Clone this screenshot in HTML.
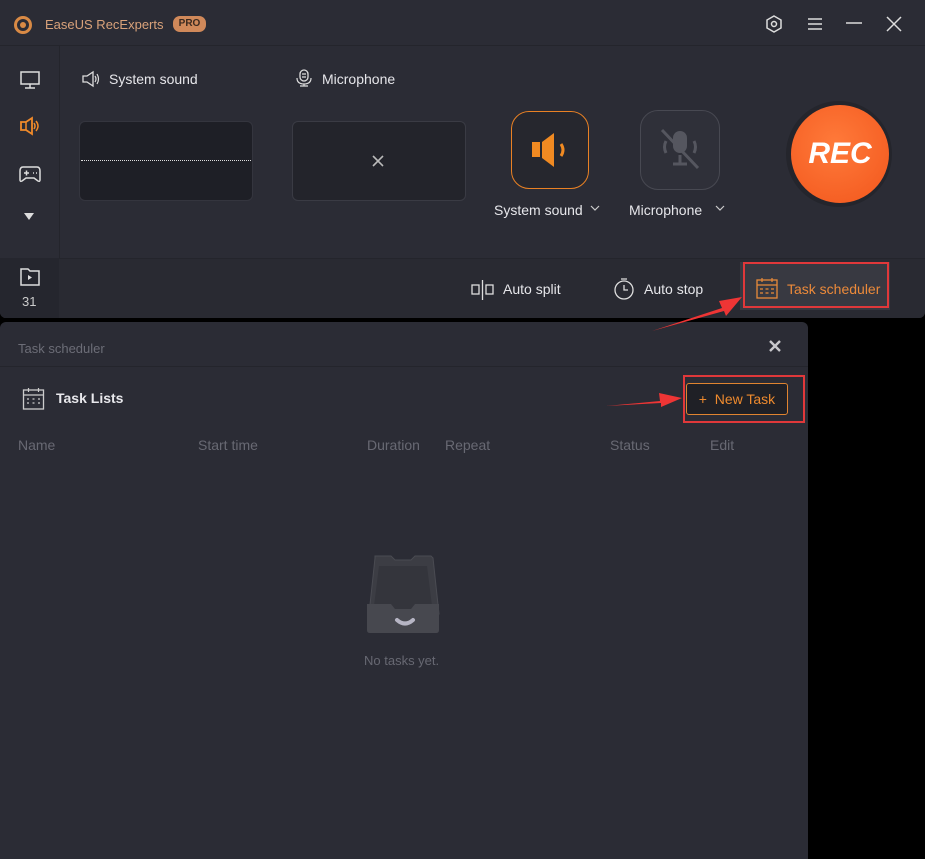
<!DOCTYPE html>
<html><head><meta charset="utf-8"><style>
*{margin:0;padding:0;box-sizing:border-box}
body{width:925px;height:859px;background:#000;position:relative;overflow:hidden;font-family:"Liberation Sans",sans-serif;color:#e6e6ea}
.a{position:absolute}
.win{left:0;top:0;width:925px;height:318px;background:#2b2c35;border-radius:0 0 6px 6px;overflow:hidden}
.pan{left:0;top:322px;width:808px;height:537px;background:#2b2c35;border-radius:6px 6px 0 0}
.t{font-size:14px;white-space:nowrap}
</style></head><body>
<div class="a win">
 <div class="a" style="left:0;top:45px;width:925px;height:1px;background:#24252c"></div>
 <div class="a" style="left:59px;top:46px;width:1px;height:212px;background:#24252c"></div>
 <div class="a" style="left:0;top:258px;width:925px;height:60px;background:#292a32;border-top:1px solid #24252c"></div>
 <div class="a" style="left:0;top:258px;width:59px;height:60px;background:#25262e"></div>
 <svg class="a" style="left:13px;top:15px" width="20" height="20"><circle cx="10" cy="10" r="7.5" fill="none" stroke="#d98a45" stroke-width="3"/><circle cx="10" cy="10" r="3" fill="#d98a45"/></svg>
 <div class="a t" style="left:45px;top:17px;color:#d9a27a;font-size:13px">EaseUS RecExperts</div>
 <div class="a" style="left:173px;top:16px;width:33px;height:16px;border-radius:7px;background:#d0895a;color:#3a2a20;font-size:10px;font-weight:bold;text-align:center;line-height:16px">PRO</div>
 <svg class="a" style="left:764px;top:14px" width="20" height="20"><path d="M10 2l7 4v8l-7 4-7-4V6z" fill="none" stroke="#ddd" stroke-width="1.5"/><circle cx="10" cy="10" r="2.5" fill="none" stroke="#ddd" stroke-width="1.5"/></svg>
 <svg class="a" style="left:806px;top:16px" width="18" height="16"><path d="M2 3h14M2 8h14M2 13h14" stroke="#ddd" stroke-width="1.5"/></svg>
 <svg class="a" style="left:845px;top:16px" width="18" height="16"><path d="M1 7h16" stroke="#ddd" stroke-width="1.5"/></svg>
 <svg class="a" style="left:885px;top:15px" width="18" height="18"><path d="M2 2l14 14M16 2L2 16" stroke="#ddd" stroke-width="1.5"/></svg>
 <svg class="a" style="left:19px;top:70px" width="22" height="20"><rect x="2" y="2" width="18" height="12" fill="none" stroke="#ddd" stroke-width="1.5"/><path d="M11 14v4M6 18h10" stroke="#ddd" stroke-width="1.5"/></svg>
 <svg class="a" style="left:19px;top:116px" width="22" height="20"><path d="M2 6h5l6-4v16l-6-4H2z" fill="none" stroke="#f08a2a" stroke-width="1.8"/><path d="M7 6v8" stroke="#f08a2a" stroke-width="1.5"/><path d="M15 7q2 3 0 6M17 5q4 5 0 10" fill="none" stroke="#f08a2a" stroke-width="1.5"/></svg>
 <svg class="a" style="left:18px;top:164px" width="24" height="20"><path d="M5 3h14q3 0 3 4v9q0 2-2 1l-4-3H8l-4 3q-2 1-2-1V7q0-4 3-4z" fill="none" stroke="#ddd" stroke-width="1.5"/><path d="M6 9h5M8.5 6.5v5M15 9h1M18 9h1" stroke="#ddd" stroke-width="1.5"/></svg>
 <svg class="a" style="left:23px;top:212px" width="12" height="10"><path d="M1 1h10L6 8z" fill="#ddd"/></svg>
 <svg class="a" style="left:19px;top:267px" width="22" height="20"><path d="M2 2h7l2 2h9v14H2z" fill="none" stroke="#ddd" stroke-width="1.5"/><path d="M9 8l4 2.5-4 2.5z" fill="#ddd"/></svg>
 <div class="a" style="left:22px;top:294px;font-size:13px;color:#ccc">31</div>
 <svg class="a" style="left:82px;top:70px" width="20" height="18"><path d="M1 6h4l6-4v14l-6-4H1z" fill="none" stroke="#ddd" stroke-width="1.3"/><path d="M13 6q2 3 0 6M15 4q3 5 0 10" fill="none" stroke="#ddd" stroke-width="1.2"/></svg>
 <div class="a t" style="left:109px;top:71px">System sound</div>
 <svg class="a" style="left:295px;top:69px" width="18" height="18"><rect x="5" y="1" width="8" height="11" rx="4" fill="none" stroke="#ddd" stroke-width="1.3"/><path d="M7 5h4M7 8h4M2 9q0 6 7 6t7-6M9 15v2M5 17h8" fill="none" stroke="#ddd" stroke-width="1.2"/></svg>
 <div class="a t" style="left:322px;top:71px">Microphone</div>
 <div class="a" style="left:79px;top:121px;width:174px;height:80px;background:#1e1f26;border-radius:6px;border:1px solid #34353e"></div>
 <div class="a" style="left:81px;top:160px;width:170px;border-top:1px dotted #ddd"></div>
 <div class="a" style="left:292px;top:121px;width:174px;height:80px;background:#23242b;border-radius:6px;border:1px solid #3a3b44"></div>
 <svg class="a" style="left:371px;top:154px" width="14" height="14"><path d="M2 2l10 10M12 2L2 12" stroke="#bbb" stroke-width="1.6"/></svg>
 <div class="a" style="left:511px;top:111px;width:78px;height:78px;border-radius:18px;border:1.5px solid #e98124;background:#26272e"></div>
 <svg class="a" style="left:530px;top:131px" width="42" height="38"><rect x="2" y="11" width="8" height="15" fill="#f08a22"/><path d="M12 11l12-9v34l-12-9z" fill="#f08a22"/><path d="M31 13q4 6 0 12" fill="none" stroke="#f08a22" stroke-width="3"/></svg>
 <div class="a" style="left:640px;top:110px;width:80px;height:80px;border-radius:18px;border:1px solid #484952;background:#2f3039"></div>
 <svg class="a" style="left:656px;top:127px" width="48" height="46"><rect x="17" y="4" width="14" height="22" rx="7" fill="#55565f"/><path d="M10 14q-3 6 0 12M38 14q3 6 0 12" stroke="#55565f" stroke-width="3" fill="none"/><path d="M24 28v8M17 37h14" stroke="#55565f" stroke-width="3"/><path d="M6 3l36 38" stroke="#55565f" stroke-width="3"/></svg>
 <div class="a t" style="left:494px;top:202px">System sound</div>
 <svg class="a" style="left:590px;top:205px" width="10" height="7"><path d="M1 1l4 4 4-4" fill="none" stroke="#ccc" stroke-width="1.2"/></svg>
 <div class="a t" style="left:629px;top:202px">Microphone</div>
 <svg class="a" style="left:715px;top:205px" width="10" height="7"><path d="M1 1l4 4 4-4" fill="none" stroke="#ccc" stroke-width="1.2"/></svg>
 <div class="a" style="left:786px;top:101px;width:106px;height:106px;border-radius:50%;background:#24252c"></div>
 <div class="a" style="left:791px;top:105px;width:98px;height:98px;border-radius:50%;background:radial-gradient(circle at 45% 40%,#ff7a3a,#f2561c);color:#fff;font-weight:bold;font-style:italic;font-size:30px;text-align:center;line-height:98px">REC</div>
 <svg class="a" style="left:471px;top:279px" width="24" height="22"><rect x="1" y="6" width="7" height="9" fill="none" stroke="#ddd" stroke-width="1.3"/><rect x="15" y="6" width="7" height="9" fill="none" stroke="#ddd" stroke-width="1.3"/><path d="M11.5 1v20" stroke="#ddd" stroke-width="1.3"/></svg>
 <div class="a t" style="left:503px;top:281px">Auto split</div>
 <svg class="a" style="left:613px;top:277px" width="22" height="24"><circle cx="11" cy="13" r="9" fill="none" stroke="#ddd" stroke-width="1.3"/><path d="M8 2h6M11 8v5h4" fill="none" stroke="#ddd" stroke-width="1.3"/></svg>
 <div class="a t" style="left:644px;top:281px">Auto stop</div>
 <div class="a" style="left:740px;top:262px;width:150px;height:48px;background:#383941"></div>
 <div class="a" style="left:743px;top:262px;width:146px;height:46px;border:2px solid #e0383a"></div>
 <svg class="a" style="left:756px;top:277px" width="22" height="22"><rect x="1" y="3" width="20" height="18" fill="none" stroke="#e98a3a" stroke-width="1.3"/><path d="M6 1v4M16 1v4M1 8h20M4 12h3M9.5 12h3M15 12h3M4 16h3M9.5 16h3M15 16h3" stroke="#e98a3a" stroke-width="1.2"/></svg>
 <div class="a t" style="left:787px;top:281px;color:#ec8a3a">Task scheduler</div>
</div>
<div class="a pan">
 <div class="a t" style="left:18px;top:19px;color:#6c6d77;font-size:13px">Task scheduler</div>
 <svg class="a" style="left:768px;top:17px" width="14" height="14"><path d="M2 2l10 10M12 2L2 12" stroke="#c8c8cc" stroke-width="2.4"/></svg>
 <div class="a" style="left:0;top:44px;width:808px;height:1px;background:#24252c"></div>
 <svg class="a" style="left:22px;top:65px" width="24" height="24"><rect x="1.5" y="3" width="20" height="19" fill="none" stroke="#ccc" stroke-width="1.3"/><path d="M6.5 1v4M16.5 1v4M1.5 8h20M5 12h2M10.5 12h2M16 12h2M5 16h2M10.5 16h2M16 16h2" stroke="#ccc" stroke-width="1.2"/></svg>
 <div class="a t" style="left:56px;top:68px;font-weight:bold;font-size:14px;color:#e8e8ec">Task Lists</div>
 <div class="a" style="left:683px;top:53px;width:122px;height:48px;border:2px solid #e0383a"></div>
 <div class="a" style="left:686px;top:61px;width:102px;height:32px;background:#1f2026;border:1px solid #e08430;border-radius:3px;color:#ee8a2e;font-size:14px;line-height:30px;text-align:center">+&nbsp;&nbsp;New Task</div>
 <div class="a t" style="left:18px;top:115px;color:#686973">Name</div>
 <div class="a t" style="left:198px;top:115px;color:#686973">Start time</div>
 <div class="a t" style="left:367px;top:115px;color:#686973">Duration</div>
 <div class="a t" style="left:445px;top:115px;color:#686973">Repeat</div>
 <div class="a t" style="left:610px;top:115px;color:#686973">Status</div>
 <div class="a t" style="left:710px;top:115px;color:#686973">Edit</div>
 <svg class="a" style="left:365px;top:230px" width="80" height="82"><path d="M10 4h16l4 4h16l4-4h16l2 2 6 56H4l6-56z" fill="#3c3d44" stroke="#4a4b52"/><path d="M14 14h48l6 48H8z" fill="#34353c"/><path d="M2 52h24l4 5h16l4-5h24v26q0 3-3 3H5q-3 0-3-3z" fill="#47484f"/><path d="M32 68q8 7 16 0" fill="none" stroke="#b6b5c4" stroke-width="4" stroke-linecap="round"/></svg>
 <div class="a t" style="left:364px;top:331px;color:#676872;font-size:13px">No tasks yet.</div>
</div>
<svg class="a" style="left:0;top:0" width="925" height="859">
 <path d="M652 331L722 308L719 301L742 297L726 316L724 311Z" fill="#ee3535"/>
 <path d="M606 406L660 401L659 393L682 398L661 407L661 403Z" fill="#ee3535"/>
</svg>
</body></html>
